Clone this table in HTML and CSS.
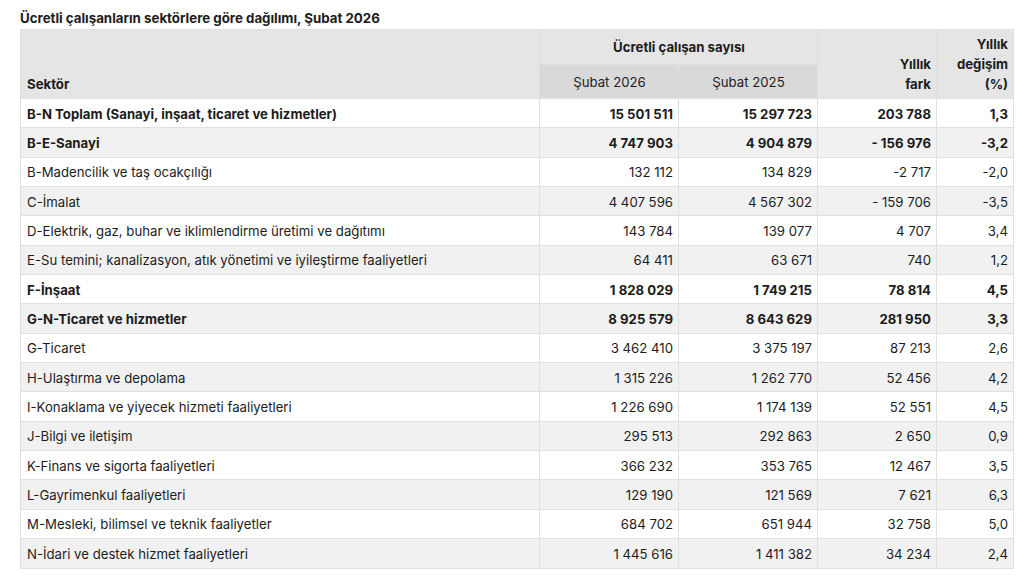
FILE: index.html
```html
<!DOCTYPE html>
<html lang="tr">
<head>
<meta charset="utf-8">
<title>Ücretli çalışanların sektörlere göre dağılımı</title>
<link rel="stylesheet" href="styles.css">
</head>
<body>
<div class="wrap">
  <div class="title">Ücretli çalışanların sektörlere göre dağılımı, Şubat 2026</div>
  <table class="data">
    <colgroup>
      <col class="c-sector">
      <col class="c-num">
      <col class="c-num">
      <col class="c-fark">
      <col class="c-pct">
    </colgroup>
    <thead>
      <tr class="h1">
        <th rowspan="2" class="left bottom">Sektör</th>
        <th colspan="2" class="center">Ücretli çalışan sayısı</th>
        <th rowspan="2" class="right bottom">Yıllık<br>fark</th>
        <th rowspan="2" class="right bottom">Yıllık<br>değişim<br>(%)</th>
      </tr>
      <tr class="h2">
        <th class="sub">Şubat 2026</th>
        <th class="sub">Şubat 2025</th>
      </tr>
    </thead>
    <tbody>
      <tr class="b"><td>B-N Toplam (Sanayi, inşaat, ticaret ve hizmetler)</td><td>15 501 511</td><td>15 297 723</td><td>203 788</td><td>1,3</td></tr>
      <tr class="b"><td>B-E-Sanayi</td><td>4 747 903</td><td>4 904 879</td><td>- 156 976</td><td>-3,2</td></tr>
      <tr><td>B-Madencilik ve taş ocakçılığı</td><td>132 112</td><td>134 829</td><td>-2 717</td><td>-2,0</td></tr>
      <tr><td>C-İmalat</td><td>4 407 596</td><td>4 567 302</td><td>- 159 706</td><td>-3,5</td></tr>
      <tr><td>D-Elektrik, gaz, buhar ve iklimlendirme üretimi ve dağıtımı</td><td>143 784</td><td>139 077</td><td>4 707</td><td>3,4</td></tr>
      <tr><td>E-Su temini; kanalizasyon, atık yönetimi ve iyileştirme faaliyetleri</td><td>64 411</td><td>63 671</td><td>740</td><td>1,2</td></tr>
      <tr class="b"><td>F-İnşaat</td><td>1 828 029</td><td>1 749 215</td><td>78 814</td><td>4,5</td></tr>
      <tr class="b"><td>G-N-Ticaret ve hizmetler</td><td>8 925 579</td><td>8 643 629</td><td>281 950</td><td>3,3</td></tr>
      <tr><td>G-Ticaret</td><td>3 462 410</td><td>3 375 197</td><td>87 213</td><td>2,6</td></tr>
      <tr><td>H-Ulaştırma ve depolama</td><td>1 315 226</td><td>1 262 770</td><td>52 456</td><td>4,2</td></tr>
      <tr><td>I-Konaklama ve yiyecek hizmeti faaliyetleri</td><td>1 226 690</td><td>1 174 139</td><td>52 551</td><td>4,5</td></tr>
      <tr><td>J-Bilgi ve iletişim</td><td>295 513</td><td>292 863</td><td>2 650</td><td>0,9</td></tr>
      <tr><td>K-Finans ve sigorta faaliyetleri</td><td>366 232</td><td>353 765</td><td>12 467</td><td>3,5</td></tr>
      <tr><td>L-Gayrimenkul faaliyetleri</td><td>129 190</td><td>121 569</td><td>7 621</td><td>6,3</td></tr>
      <tr><td>M-Mesleki, bilimsel ve teknik faaliyetler</td><td>684 702</td><td>651 944</td><td>32 758</td><td>5,0</td></tr>
      <tr><td>N-İdari ve destek hizmet faaliyetleri</td><td>1 445 616</td><td>1 411 382</td><td>34 234</td><td>2,4</td></tr>
    </tbody>
  </table>
</div>
</body>
</html>
```
FILE: styles.css
```css
html, body {
  margin: 0;
  padding: 0;
  background: #ffffff;
}
body {
  font-family: Inter, "Noto Sans", "Liberation Sans", sans-serif;
  font-size: 13.2px;
  color: #1c1c1c;
}
.wrap {
  padding: 10px 20px 0 20px;
}
.title {
  font-weight: 700;
  font-size: 13.3px;
  line-height: 16px;
  margin-bottom: 3px;
}
.data {
  width: 993px;
  border-collapse: collapse;
  table-layout: fixed;
}
.c-sector { width: 519px; }
.c-num { width: 139px; }
.c-fark { width: 119px; }
.c-pct { width: 77px; }

.data th, .data td {
  border: 1px solid #e0e0e0;
}
.data th {
  background: #e5e5e5;
  font-weight: 700;
  line-height: 20px;
  padding: 4px 5px 4px 6px;
  vertical-align: bottom;
}
.data .h1 th { height: 26px; }
.data .h2 th { height: 25px; }
.data th.left { text-align: left; }
.data th.center { text-align: center; vertical-align: middle; }
.data th.right { text-align: right; }
.data th.sub {
  background: #d9d9d9;
  font-weight: 400;
  text-align: center;
  vertical-align: middle;
}
.data td {
  padding: 6.5px 5px 5.5px 6px;
  line-height: 16.35px;
  text-align: right;
  white-space: nowrap;
}
.data td:first-child {
  text-align: left;
}
.data tbody tr:nth-child(even) td {
  background: #f1f1f1;
}
.data tbody tr.b td {
  font-weight: 700;
}
```
